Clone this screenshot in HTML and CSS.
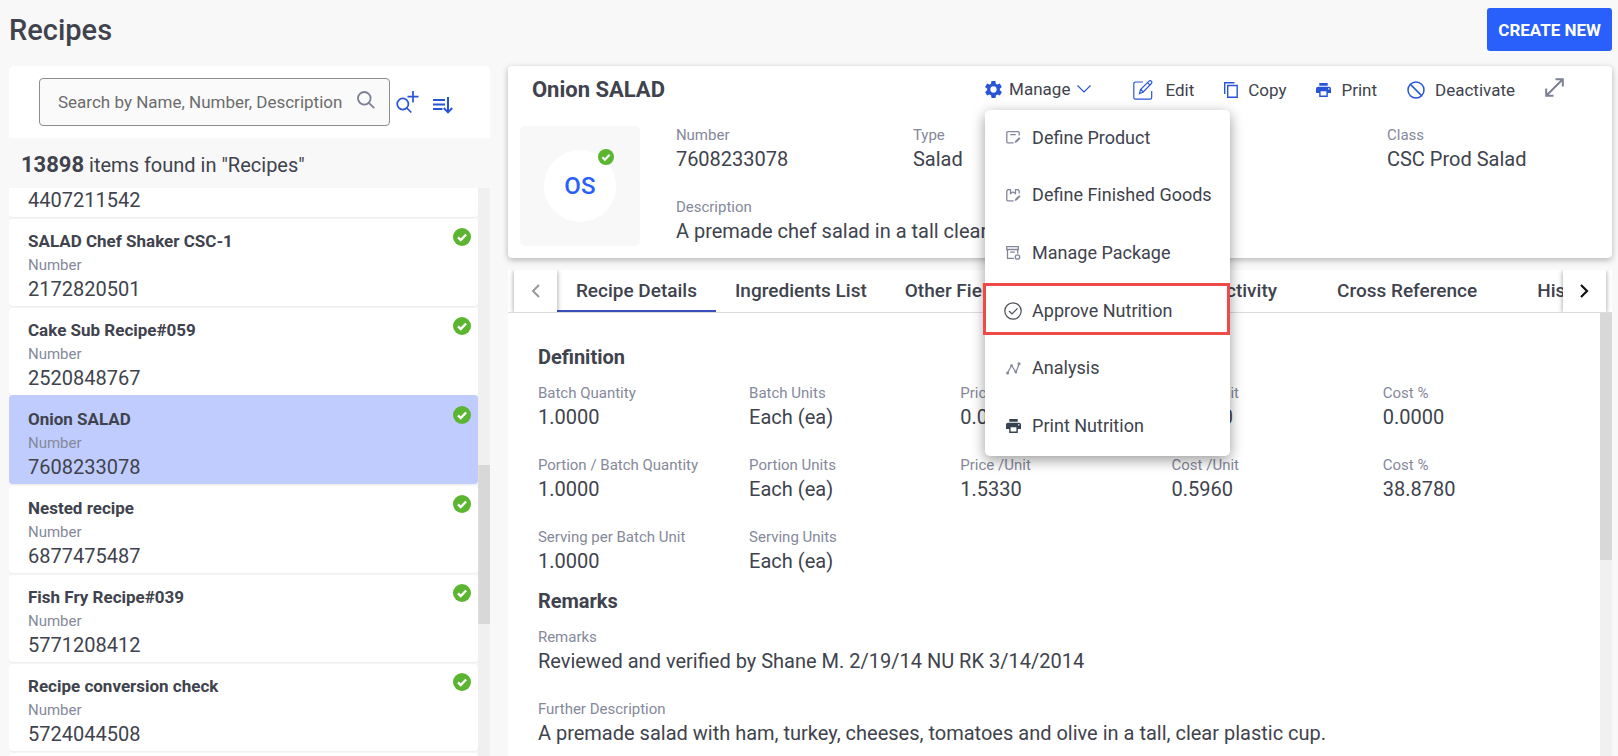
FILE: index.html
```html
<!DOCTYPE html>
<html lang="en">
<head>
<meta charset="utf-8">
<title>Recipes</title>
<link rel="stylesheet" href="styles.css">
</head>
<body>
<svg class="sprite" aria-hidden="true">
  <symbol id="check" viewBox="0 0 18 18"><circle cx="9" cy="9" r="9" fill="#5cb531"/><path d="M5 9.400l2.700 2.700 5.400-5.600" fill="none" stroke="#fff" stroke-width="2.400"/></symbol>
  <symbol id="printer" viewBox="0 0 15 14"><path d="M3.300 0h8.400v2.800H3.300zM2 3.700h11a2 2 0 0 1 2 2V10h-3.200v4H3.200v-4H0V5.700a2 2 0 0 1 2-2zM4.600 8.300v4.300h5.800V8.300zM12 5.200v1.400h1.400V5.200z" fill="currentColor" fill-rule="evenodd"/></symbol>
</svg>
<header class="page-header">
  <h1>Recipes</h1>
  <button class="create" type="button">CREATE NEW</button>
</header>
<main class="workspace">
  <section class="list-panel">
    <form class="search">
      <div class="search-box">
        <input type="text" aria-label="Search recipes" placeholder="Search by Name, Number, Description">
        <svg width="18" height="18" viewBox="0 0 18 18" fill="none" stroke="#7c8194" stroke-width="1.800"><circle cx="7.300" cy="7.300" r="6.300"/><path d="M11.800 11.800l5.500 5.300"/></svg>
      </div>
      <button class="icon-button" type="button" aria-label="Advanced search"><svg width="23" height="23" viewBox="0 0 23 23" fill="none" stroke="#2855d6" stroke-width="1.700"><circle cx="6.800" cy="13" r="5.600"/><path d="M10.800 17l4.500 4.500M17 0v11.500M11.500 5.700h11"/></svg></button>
      <button class="icon-button" type="button" aria-label="Sort"><svg width="20" height="18" viewBox="0 0 20 18" fill="none" stroke="#2855d6" stroke-width="2"><path d="M0 4h12M0 8.500h12M0 13h9.500M15 1v15M10.800 12l4.200 4.400 4.200-4.400"/></svg></button>
    </form>
    <p class="count"><strong>13898</strong> items found in "Recipes"</p>
    <div class="scroll-area">
      <ul class="recipes">
        <li class="recipe partial"><span class="value">4407211542</span></li>
        <li class="recipe"><h3>SALAD Chef Shaker CSC-1</h3><span class="label">Number</span><span class="value">2172820501</span><svg class="status"><use href="#check"/></svg></li>
        <li class="recipe"><h3>Cake Sub Recipe#059</h3><span class="label">Number</span><span class="value">2520848767</span><svg class="status"><use href="#check"/></svg></li>
        <li class="recipe selected"><h3>Onion SALAD</h3><span class="label">Number</span><span class="value">7608233078</span><svg class="status"><use href="#check"/></svg></li>
        <li class="recipe"><h3>Nested recipe</h3><span class="label">Number</span><span class="value">6877475487</span><svg class="status"><use href="#check"/></svg></li>
        <li class="recipe"><h3>Fish Fry Recipe#039</h3><span class="label">Number</span><span class="value">5771208412</span><svg class="status"><use href="#check"/></svg></li>
        <li class="recipe"><h3>Recipe conversion check</h3><span class="label">Number</span><span class="value">5724044508</span><svg class="status"><use href="#check"/></svg></li>
        <li class="recipe"></li>
      </ul>
      <div class="scrollbar list-bar"><div class="thumb"></div></div>
    </div>
  </section>

  <section class="detail-panel">
    <div class="summary">
      <div class="summary-head">
        <h2>Onion SALAD</h2>
        <div class="manage">
          <button class="action" type="button" aria-expanded="true">
            <svg width="17" height="17" viewBox="2 2 20 20" fill="#2855d6"><path d="M19.400 13c0-.3.100-.6.100-1s0-.7-.1-1l2.100-1.600c.2-.2.300-.4.100-.7l-2-3.400c-.1-.2-.4-.3-.6-.2l-2.500 1a7 7 0 0 0-1.700-1l-.4-2.600a.5.500 0 0 0-.5-.5h-4a.5.500 0 0 0-.5.500L9.100 5.100a7 7 0 0 0-1.700 1l-2.500-1c-.2-.1-.5 0-.6.200l-2 3.400c-.1.300-.1.500.1.700L4.600 11a8 8 0 0 0 0 2l-2.200 1.600c-.2.200-.2.400-.1.700l2 3.400c.1.200.4.300.6.200l2.500-1a7 7 0 0 0 1.700 1l.4 2.600c0 .3.200.5.500.5h4c.3 0 .5-.2.500-.5l.4-2.600a7 7 0 0 0 1.700-1l2.500 1c.2.100.5 0 .6-.2l2-3.400c.1-.3.100-.5-.1-.7zM12 15.700a3.700 3.700 0 1 1 0-7.400 3.700 3.700 0 0 1 0 7.400z"/></svg>
            <span>Manage</span>
            <svg width="14" height="8" viewBox="0 0 14 8" fill="none" stroke="#2855d6" stroke-width="1.200"><path d="M.5.500L7 7 13.500.5"/></svg>
          </button>
          <div class="menu" role="menu">
            <button type="button" role="menuitem"><svg width="15" height="13" viewBox="0 0 15 13" fill="none" stroke="#82879a" stroke-width="1.300"><path d="M7.500 11.800H1.800a1 1 0 0 1-1-1V1.700a1 1 0 0 1 1-1h10.400a1 1 0 0 1 1 1V4.500M4.200 3.700h5.600"/><path d="M8.600 12l.7-2.300 3.900-3.500 1.400 1.400-3.800 3.700z" fill="#82879a" stroke="none"/></svg>Define Product</button>
            <button type="button" role="menuitem"><svg width="15" height="13" viewBox="0 0 15 13" fill="none" stroke="#82879a" stroke-width="1.300"><path d="M7.500 11.800H1.800a1 1 0 0 1-1-1V2L2 .7h2.500v3.800L7 3l2.500 1.500V.7H12L13.200 2v2.500"/><path d="M8.600 12l.7-2.300 3.900-3.500 1.400 1.400-3.800 3.700z" fill="#82879a" stroke="none"/></svg>Define Finished Goods</button>
            <button type="button" role="menuitem"><svg width="15" height="14" viewBox="0 0 15 14" fill="none" stroke="#82879a" stroke-width="1.300"><path d="M.7.700h11.600v2.800H.700zM1.500 3.500v8.800H8M11.700 3.500v4M4.200 6.200h4.600"/><circle cx="11.500" cy="11" r="2.200"/></svg>Manage Package</button>
            <button class="marked" type="button" role="menuitem"><svg width="18" height="18" viewBox="0 0 18 18" fill="none" stroke="#4a4d55" stroke-width="1.200"><circle cx="9" cy="9" r="8.200"/><path d="M5 9l3 3 5.500-5.700"/></svg>Approve Nutrition</button>
            <button type="button" role="menuitem"><svg width="15" height="13" viewBox="0 0 15 13" fill="none" stroke="#82879a" stroke-width="1.200"><path d="M1.500 11L5.500 3.500l4.500 7L13 2"/><g fill="#82879a" stroke="none"><circle cx="1.600" cy="11" r="1.500"/><circle cx="5.500" cy="3.500" r="1.300"/><circle cx="9.800" cy="10" r="1.400"/><circle cx="13" cy="1.700" r="1.500"/></g></svg>Analysis</button>
            <button type="button" role="menuitem"><svg class="dark" width="15" height="14"><use href="#printer"/></svg>Print Nutrition</button>
          </div>
        </div>
        <button class="action edit" type="button"><svg width="20" height="20" viewBox="0 0 20 20" fill="none" stroke="#2855d6" stroke-width="1.200"><path d="M10 2H2.500A1.700 1.700 0 0 0 .8 3.700v13.800a1.700 1.700 0 0 0 1.700 1.700H17a1.700 1.700 0 0 0 1.700-1.700V11M6.500 13.500l1-4L16 1.200a1.600 1.600 0 0 1 2.400 0 1.600 1.600 0 0 1 0 2.300L10 12.200zM14.500 2.700l2.500 2.500M8 9.500l2 2.300"/></svg><span>Edit</span></button>
        <button class="action" type="button"><svg width="14" height="16" viewBox="0 0 14 16" fill="none" stroke="#2855d6" stroke-width="1.400"><path d="M.7 12V.7h9.800M3.700 3.500h9.500v11.700H3.700z"/></svg><span>Copy</span></button>
        <button class="action" type="button"><svg class="blue" width="15" height="14"><use href="#printer"/></svg><span>Print</span></button>
        <button class="action" type="button"><svg width="18" height="18" viewBox="0 0 18 18" fill="none" stroke="#2855d6" stroke-width="1.500"><circle cx="9" cy="9" r="8"/><path d="M3.400 3.400l11.200 11.200"/></svg><span>Deactivate</span></button>
        <button class="expand" type="button" aria-label="Expand"><svg width="19" height="19" viewBox="0 0 19 19" fill="none" stroke="#7c8194" stroke-width="2"><path d="M1.500 17.500l16-16M10.500 1.200h7.300v7.300M1.200 10.500v7.300h7.300"/></svg></button>
      </div>
      <div class="summary-body">
        <div class="thumbnail"><div class="avatar">OS<svg class="badge"><use href="#check"/></svg></div></div>
        <dl class="fields summary-fields">
          <div><dt>Number</dt><dd>7608233078</dd></div>
          <div><dt>Type</dt><dd>Salad</dd></div>
          <div></div>
          <div><dt>Class</dt><dd>CSC Prod Salad</dd></div>
          <div class="wide"><dt>Description</dt><dd>A premade chef salad in a tall clear cup</dd></div>
        </dl>
      </div>
    </div>

    <nav class="tabs">
      <button class="pager" type="button" aria-label="Previous tabs"><svg width="9" height="14" viewBox="0 0 9 14" fill="none" stroke="#999" stroke-width="2"><path d="M8 1L2 7l6 6"/></svg></button>
      <div class="tab-strip">
        <a class="active" href="#details">Recipe Details</a>
        <a href="#ingredients">Ingredients List</a>
        <a href="#other">Other Fields</a>
        <a class="roomy" href="#procedures">Procedures</a>
        <a class="roomy" href="#activity">Activity</a>
        <a class="roomy" href="#cross">Cross Reference</a>
        <a class="roomy" href="#history">History</a>
      </div>
      <button class="pager" type="button" aria-label="Next tabs"><svg width="9" height="14" viewBox="0 0 9 14" fill="none" stroke="#111" stroke-width="2.200"><path d="M1 1l6 6-6 6"/></svg></button>
    </nav>

    <div class="scroll-area">
      <div class="details" id="details">
        <h3>Definition</h3>
        <dl class="fields definition">
          <div><dt>Batch Quantity</dt><dd>1.0000</dd></div>
          <div><dt>Batch Units</dt><dd>Each (ea)</dd></div>
          <div><dt>Price /Unit</dt><dd>0.0000</dd></div>
          <div><dt>Cost /Unit</dt><dd>0.0000</dd></div>
          <div><dt>Cost %</dt><dd>0.0000</dd></div>
          <div><dt>Portion / Batch Quantity</dt><dd>1.0000</dd></div>
          <div><dt>Portion Units</dt><dd>Each (ea)</dd></div>
          <div><dt>Price /Unit</dt><dd>1.5330</dd></div>
          <div><dt>Cost /Unit</dt><dd>0.5960</dd></div>
          <div><dt>Cost %</dt><dd>38.8780</dd></div>
          <div><dt>Serving per Batch Unit</dt><dd>1.0000</dd></div>
          <div><dt>Serving Units</dt><dd>Each (ea)</dd></div>
        </dl>
        <h3>Remarks</h3>
        <dl class="fields">
          <div><dt>Remarks</dt><dd>Reviewed and verified by Shane M. 2/19/14 NU RK 3/14/2014</dd></div>
          <div><dt>Further Description</dt><dd>A premade salad with ham, turkey, cheeses, tomatoes and olive in a tall, clear plastic cup.</dd></div>
        </dl>
      </div>
      <div class="scrollbar detail-bar"><div class="thumb"></div></div>
    </div>
  </section>
</main>
</body>
</html>
```
FILE: styles.css
```css
* { box-sizing: border-box; margin: 0; padding: 0; }

body {
  display: flex;
  flex-direction: column;
  height: 100vh;
  overflow: hidden;
  padding: 0 6px 0 9px;
  background: #f8f8f8;
  color: #40434d;
  font-family: Roboto, "Liberation Sans", sans-serif;
}

button { border: 0; background: none; color: inherit; font: inherit; cursor: pointer; }
ul { list-style: none; }
a { color: inherit; text-decoration: none; }
svg { flex: none; display: block; }
.sprite { position: absolute; width: 0; height: 0; }

.page-header {
  display: flex;
  flex: none;
  align-items: flex-start;
  justify-content: space-between;
  height: 66px;
  padding-top: 8px;
}
h1 { font-size: 29px; font-weight: 500; line-height: 44px; }
.create {
  height: 43px;
  padding: 0 11px;
  border-radius: 3px;
  background: #295ffb;
  color: #fff;
  font-size: 17px;
  font-weight: 700;
}

.workspace { display: flex; flex: 1; gap: 18px; min-height: 0; }
.list-panel { display: flex; flex: 0 0 30%; flex-direction: column; min-width: 0; }
.detail-panel { display: flex; flex: 1; flex-direction: column; min-width: 0; }
.scroll-area { display: flex; flex: 1; min-height: 0; overflow: hidden; }

/* Search and list */
.search {
  display: flex;
  flex: none;
  align-items: center;
  height: 72px;
  padding: 0 37px 0 30px;
  border-radius: 5px 5px 0 0;
  background: #fff;
}
.search-box {
  display: flex;
  flex: 1;
  align-items: center;
  height: 48px;
  margin-right: 6px;
  padding: 0 14px 0 18px;
  border: 1px solid #8d8d8d;
  border-radius: 4px;
  background: #fafafa;
}
.search-box svg { margin-bottom: 5px; }
.search-box input {
  flex: 1;
  min-width: 0;
  border: 0;
  outline: 0;
  background: none;
  color: #40434d;
  font: 400 17px/24px Roboto, "Liberation Sans", sans-serif;
}
.search-box input::placeholder { color: #6c6c6c; opacity: 1; }
.icon-button + .icon-button { margin-left: 14px; padding-top: 5px; }
.count { flex: none; height: 50px; padding-left: 12px; font-size: 20px; line-height: 54px; }
.count strong { font-size: 22px; font-weight: 700; }

.recipes { flex: 1; }
.recipe {
  position: relative;
  height: 87px;
  margin-bottom: 2px;
  padding: 10px 19px 0;
  border-radius: 4px;
  background: #fff;
  box-shadow: 0 1px 2px #ececec;
}
.recipe.partial { height: 29px; padding-top: 0; border-radius: 0 0 4px 4px; }
.recipe.selected { height: 89px; margin-top: -2px; padding-top: 12px; background: #bfccfd; }
.recipe h3 { font-size: 17px; font-weight: 700; line-height: 24px; }
.label, .value { display: block; line-height: 24px; }
.label, dt { color: #85899a; font-size: 15px; }
.value, dd { font-size: 20px; }
.status { position: absolute; top: 9px; right: 7px; width: 18px; height: 18px; }
.selected .status { top: 11px; }

.scrollbar { flex: none; width: 12px; background: #f0f0f0; }
.thumb { background: #d8d8d8; }
.list-bar { padding-top: 277px; }
.list-bar .thumb { height: 159px; }
.detail-bar .thumb { height: 247px; }

/* Recipe summary */
.summary {
  position: relative;
  z-index: 1;
  flex: none;
  height: 192px;
  border-radius: 4px;
  background: #fff;
  box-shadow: 0 2px 6px rgba(0, 0, 0, .28);
}
.summary-head { display: flex; align-items: center; gap: 30px; height: 44px; padding: 0 48px 0 24px; }
h2 { flex: 1; padding-top: 2px; font-size: 22px; font-weight: 700; }
.action { display: flex; align-items: center; gap: 10px; padding-top: 4px; font-size: 17px; line-height: 24px; }
.action.edit { gap: 12px; margin-left: 12px; }
.expand { padding-bottom: 2px; }
.blue { color: #2855d6; }
.dark { color: #35424f; }

.manage { position: relative; }
.manage .action { gap: 7px; height: 44px; padding-top: 2px; }
.menu {
  position: absolute;
  top: 100%;
  left: 0;
  display: grid;
  grid-auto-rows: 1fr;
  width: 245px;
  height: 346px;
  border-radius: 5px;
  background: #fff;
  box-shadow: 0 4px 14px rgba(0, 0, 0, .4);
}
.menu button {
  display: grid;
  grid-template-columns: 18px 1fr;
  align-items: center;
  gap: 10px;
  padding: 0 0 2px 19px;
  font-size: 18px;
  line-height: 24px;
  text-align: left;
  white-space: nowrap;
}
.menu svg { justify-self: center; }
.menu .marked { position: relative; }
.marked::after { content: ""; position: absolute; inset: 0 0 6px -2px; border: 3px solid #ec4b47; }

.summary-body { display: flex; gap: 36px; padding: 13px 0 0 12px; }
.thumbnail {
  display: flex;
  flex: none;
  align-items: center;
  justify-content: center;
  width: 120px;
  height: 120px;
  margin-top: 3px;
  border-radius: 5px;
  background: #f8f8f8;
}
.avatar {
  position: relative;
  width: 72px;
  height: 72px;
  border-radius: 50%;
  background: #fff;
  color: #295ffb;
  font-size: 24px;
  font-weight: 500;
  line-height: 72px;
  text-align: center;
}
.badge { position: absolute; top: -1px; right: 2px; width: 16px; height: 16px; }

.fields { display: grid; row-gap: 24px; line-height: 24px; }
.summary-fields { flex: 1; grid-template-columns: repeat(4, 1fr); align-content: start; column-gap: 12px; }
.wide { grid-column: 1 / -1; }

/* Tabs */
.tabs {
  display: flex;
  flex: none;
  height: 43px;
  margin-top: 12px;
  padding: 0 6px;
  border-bottom: 1px solid #dcdcdc;
  background: #fff;
}
.pager {
  display: flex;
  flex: none;
  align-items: center;
  justify-content: center;
  width: 43px;
  background: #fff;
  box-shadow: 0 1px 5px rgba(0, 0, 0, .4);
  clip-path: inset(0 -8px);
}
.tab-strip { display: flex; flex: 1; min-width: 0; overflow: hidden; }
.tab-strip a {
  flex: none;
  padding: 0 19px;
  font-size: 19px;
  font-weight: 500;
  line-height: 42px;
  text-align: center;
}
.tab-strip .roomy { padding: 0 30px; }
.tab-strip .active { border-bottom: 2px solid #3a50b8; }

/* Details */
.details { flex: 1; min-width: 0; padding: 32px 16px 0 30px; background: #fff; }
.details h3 { margin-bottom: 12px; font-size: 20px; font-weight: 700; line-height: 24px; }
.definition { grid-template-columns: repeat(5, 1fr); column-gap: 10px; margin-bottom: 16px; }
```
